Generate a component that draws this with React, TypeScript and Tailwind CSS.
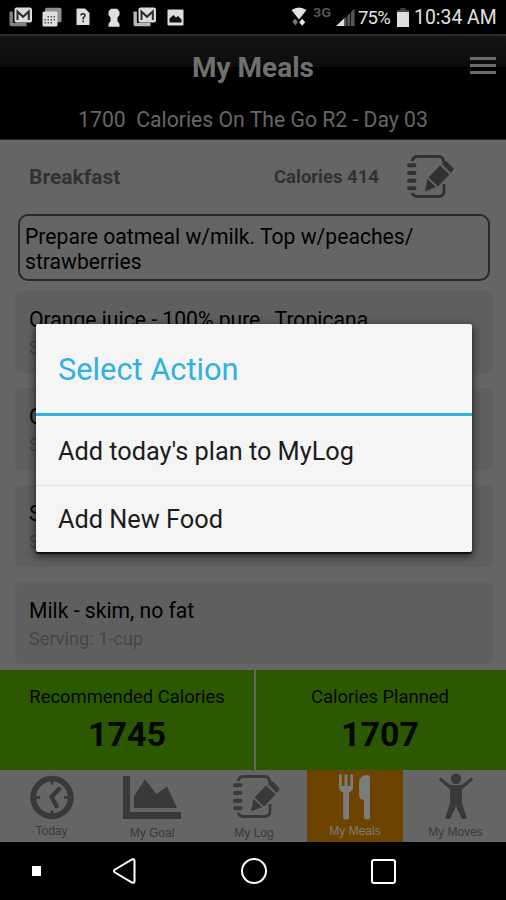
import React from 'react';

type IconProps = { className?: string };

/* Status bar icons */
function MailStack({ className, back }: IconProps & { back: string }) {
  return (
    <svg className={className} width="24" height="20" viewBox="0 0 24 20" fill="none">
      <path d="M2.2 4.5V17.5H17.5" stroke={back} strokeWidth="3.4" strokeLinejoin="round" />
      <rect x="5.5" y="0.5" width="17.5" height="15" rx="2" fill="#dcdcdc" />
      <path d="M8.5 13V4.5L14 9.8L19.8 4.5V13" stroke="#2a2a2a" strokeWidth="2" />
    </svg>
  );
}

function CalendarStack() {
  return (
    <svg width="20" height="20" viewBox="0 0 20 20">
      <rect x="3" y="0.8" width="16.5" height="14.5" rx="1.5" fill="#8f8f8f" />
      <rect x="0.5" y="4.5" width="15" height="15" rx="1.5" fill="#dedede" />
      <g fill="#555">
        <rect x="5.5" y="9" width="1.5" height="1.5" /><rect x="8.5" y="9" width="1.5" height="1.5" /><rect x="11.5" y="9" width="1.5" height="1.5" />
        <rect x="2.5" y="12" width="1.5" height="1.5" /><rect x="5.5" y="12" width="1.5" height="1.5" /><rect x="8.5" y="12" width="1.5" height="1.5" /><rect x="11.5" y="12" width="1.5" height="1.5" />
        <rect x="2.5" y="15" width="1.5" height="1.5" /><rect x="5.5" y="15" width="1.5" height="1.5" /><rect x="8.5" y="15" width="1.5" height="1.5" />
      </g>
    </svg>
  );
}

function HelpDoc() {
  return (
    <svg width="14" height="18" viewBox="0 0 14 18">
      <path d="M1 0.5H9L13.5 5V17H0.5V1Z" fill="#dedede" />
      <path d="M4.8 7.3Q5 5.7 7 5.7Q9 5.8 9 7.6Q9 8.8 7.2 9.8V11.5" fill="none" stroke="#222" strokeWidth="1.5" />
      <rect x="6.4" y="12.6" width="1.6" height="1.6" fill="#222" />
    </svg>
  );
}

function Pawn() {
  return (
    <svg width="12" height="19" viewBox="0 0 12 19" fill="#dedede">
      <path d="M3 0.8H9L11.5 3.5V7L9.5 9.5V13L11.5 16V18.7H0.5V16L2.5 13V9.5L0.5 7V3.5Z" />
    </svg>
  );
}

function Picture() {
  return (
    <svg width="17" height="17" viewBox="0 0 17 17">
      <rect x="0.5" y="0.5" width="16" height="16" rx="1" fill="#dedede" />
      <path d="M2.5 13.5V9.5L6.5 6L9 8.5L11 7L14.5 10.5V13.5Z" fill="#111" />
    </svg>
  );
}

function Wifi() {
  return (
    <svg width="16" height="20" viewBox="0 0 16 20">
      <path d="M0.5 3Q8 -2 15.5 3L8 12.5Z" fill="#e4e4e4" />
      <path d="M3.8 11.5L6.8 14.8L4.5 18.5L1.5 14.8Z" fill="#777" />
      <path d="M11.2 18.8L8.2 15.3L11.2 11.8L14.2 15.3Z" fill="#e4e4e4" />
    </svg>
  );
}

function Signal() {
  return (
    <svg width="19" height="19" viewBox="0 0 19 19">
      <path d="M0 18L8.5 10V18Z" fill="#dedede" />
      <path d="M8.5 10.3L10.5 8.5V18H8.5ZM11.3 7.7L14.2 5V18H11.3ZM15 4L18.5 0.5V18H15Z" fill="#555" />
    </svg>
  );
}

/* App icons */
function LogIcon({ className }: IconProps) {
  return (
    <svg className={className} width="47" height="44" viewBox="0 0 47 44" fill="none" stroke="currentColor">
      <path d="M5 6Q6.5 1.5 10.5 1.5H31.5Q36.5 1.5 36.5 7M37 29V36Q37 41.5 31.5 41.5H10.5Q6.5 41.5 5 38" strokeWidth="2.8" />
      <path d="M2 10.3H7.5M2 18H7.5M2 25.7H7.5M2 33.2H7.5" strokeWidth="4" strokeLinecap="round" />
      <path d="M33 10.5L42.5 19.5L31 31.5L21.5 22.5Z" fill="currentColor" stroke="none" />
      <path d="M20.5 24L29 32L18 36.5Z" fill="currentColor" stroke="none" />
      <path d="M34.8 9L37.2 6.5Q38.5 5.5 40 6.8L46 12.8Q47 14.3 46 15.5L43.8 18Z" fill="currentColor" stroke="none" />
    </svg>
  );
}

function ClockIcon() {
  return (
    <svg width="44" height="45" viewBox="0 0 44 45" fill="none" stroke="currentColor">
      <circle cx="22" cy="22.5" r="18.8" strokeWidth="5.8" />
      <path d="M22 6V9.5M22 35.5V39M6 22.5H10M34 22.5H38" strokeWidth="2.4" />
      <path d="M29 14L21.5 22L26.5 31" strokeWidth="4.4" strokeLinecap="round" strokeLinejoin="round" />
    </svg>
  );
}

function GoalIcon() {
  return (
    <svg width="58" height="44" viewBox="0 0 58 44" fill="currentColor">
      <path d="M0 0H7V36H58V43H0Z" />
      <path d="M11 32V20L22 3.5L33.5 18L44 10.5L54 32Z" />
    </svg>
  );
}

function MealsIcon() {
  return (
    <svg width="32" height="46" viewBox="0 0 32 46" fill="currentColor">
      <path d="M0 1.5Q0 0 1.3 0T2.8 1.5V12H5.5V1.5Q5.5 0 7 0T8.5 1.5V12H11.3V1.5Q11.3 0 12.7 0T14 1.5V13Q14 17 10 18.5V44Q10 45.5 7.2 45.5T4.2 44V18.5Q0 17 0 13Z" />
      <path d="M20 9Q20.5 1 28 1Q31 1 31 4V43.5Q31 45.5 28 45.5T25 43.5V26Q20 25.5 20 21Z" />
    </svg>
  );
}

function MovesIcon() {
  return (
    <svg width="36" height="47" viewBox="0 0 36 47" fill="currentColor">
      <circle cx="18" cy="5.8" r="5.2" />
      <path d="M2.5 4.5L12.5 12H23.5L33.5 4.5Q35.5 5.5 34.5 7.3L24 16.5V30L28.8 44.5Q26.5 47.5 23.5 45.5L18 33L12.5 45.5Q9.5 47.5 7.2 44.5L12 30V16.5L1.5 7.3Q0.5 5.5 2.5 4.5Z" />
    </svg>
  );
}

const foods = [
  { name: 'Orange juice - 100% pure,  Tropicana', serving: 'Serving: 1-cup' },
  { name: 'Oatmeal', serving: 'Serving: 1-cup' },
  { name: 'Strawberries', serving: 'Serving: 1-cup' },
  { name: 'Milk - skim, no fat', serving: 'Serving: 1-cup' },
];

export default function App() {
  return (
    <div className="relative w-[506px] h-[900px] overflow-hidden bg-[#656565] font-['Roboto',sans-serif] flex flex-col">
      {/* Status bar */}
      <div className="h-[34px] shrink-0 bg-black flex items-center pl-[9px] pr-[8px] text-[#e2e2e2]">
        <MailStack back="#808080" />
        <div className="ml-[9px]"><CalendarStack /></div>
        <div className="ml-[14px]"><HelpDoc /></div>
        <div className="ml-[18px]"><Pawn /></div>
        <MailStack className="ml-[13px]" back="#b8b8b8" />
        <div className="ml-[10px]"><Picture /></div>
        <div className="ml-auto"><Wifi /></div>
        <span className="ml-[6px] w-[20px] -mt-[9px] text-[12px] leading-none font-bold text-[#555] scale-x-120 origin-left">3G</span>
        <div className="ml-[3px]"><Signal /></div>
        <span className="ml-[3px] w-[34px] mt-[2px] text-[18.5px] leading-none tracking-[-0.8px]">75%</span>
        <svg className="ml-[5px]" width="12" height="19" viewBox="0 0 12 19">
          <path d="M3.5 0H8.5V2H12V5H0V2H3.5Z" fill="#444" />
          <rect y="4" width="12" height="15" fill="#dedede" />
        </svg>
        <span className="ml-[5px] w-[84px] mt-[2px] text-[19.4px] leading-none whitespace-nowrap">10:34 AM</span>
      </div>

      {/* Header */}
      <header className="h-[106px] shrink-0 bg-black border-t-2 border-b border-[#2b2b2b] relative">
        <div className="h-[31px] bg-linear-to-b from-[#151515] to-[#0c0c0c]" />
        <h1 className="-mt-[17px] h-[36px] text-center text-[28px] leading-[36px] font-bold text-[#707070]">My Meals</h1>
        <p className="mt-[20px] text-center text-[21.2px] leading-[28px] text-[#666] whitespace-pre">1700  Calories On The Go R2 - Day 03</p>
        <div className="absolute right-[10px] top-[21px] flex flex-col gap-1">
          <div className="w-[26px] h-[3px] bg-[#6b6b6b]" />
          <div className="w-[26px] h-[3px] bg-[#6b6b6b]" />
          <div className="w-[26px] h-[3px] bg-[#6b6b6b]" />
        </div>
      </header>

      {/* Meal plan */}
      <main className="h-[530px] shrink-0 overflow-hidden">
        <div className="h-[74px] flex items-center pl-[29px] text-[#303232] font-bold">
          <span className="w-[245px] mt-px text-[21px]">Breakfast</span>
          <span className="w-[133px] mt-px text-[18.5px]">Calories 414</span>
          <LogIcon className="-mt-px" />
        </div>
        <div className="ml-[18px] w-[472px] h-[67px] rounded-[10px] border-2 border-[#262a2a] pl-[5px] pt-[8px] text-[21.15px] leading-[25px] text-black">
          Prepare oatmeal w/milk. Top w/peaches/<br />strawberries
        </div>
        <div className="mt-[10px] flex flex-col gap-[15px]">
          {foods.map((food) => (
            <div key={food.name} className="ml-[15px] w-[478px] h-[82px] shrink-0 rounded-[6px] bg-[#5f5f5f] pl-[14px] pt-[15px]">
              <p className="text-[21.15px] leading-[28px] text-black whitespace-pre">{food.name}</p>
              <p className="text-[18.2px] leading-[28px] text-[#464646]">{food.serving}</p>
            </div>
          ))}
        </div>
      </main>

      {/* Calorie totals */}
      <div className="h-[100px] shrink-0 flex text-center text-[#040800]">
        <div className="w-[254px] bg-[#2c5800] pt-[14px]">
          <p className="text-[18.4px] leading-[26px]">Recommended Calories</p>
          <p className="text-[34px] leading-[48px] font-bold">1745</p>
        </div>
        <div className="w-[2px] bg-[#656565]" />
        <div className="flex-1 bg-[#2c5800] pt-[14px] pr-[2px]">
          <p className="text-[18.4px] leading-[26px]">Calories Planned</p>
          <p className="text-[34px] leading-[48px] font-bold">1707</p>
        </div>
      </div>

      {/* Tabs */}
      <nav className="h-[72px] shrink-0 flex text-[#393939] font-['Liberation_Sans',sans-serif] text-[12px] leading-[14px]">
        <div className="w-[103px] pt-[5px] flex flex-col items-center">
          <ClockIcon />
          <span className="mt-[4px]">Today</span>
        </div>
        <div className="w-[98px] pt-[6px] flex flex-col items-center">
          <GoalIcon />
          <span className="mt-[6px]">My Goal</span>
        </div>
        <div className="w-[106px] pt-[5px] flex flex-col items-center">
          <LogIcon className="ml-[4px]" />
          <span className="mt-[7px]">My Log</span>
        </div>
        <div className="w-[96px] pt-[4px] flex flex-col items-center bg-[#6c4400] text-[#7c7c7c]">
          <MealsIcon />
          <span className="mt-[4px]">My Meals</span>
        </div>
        <div className="flex-1 pt-[3px] pl-[2px] flex flex-col items-center">
          <MovesIcon />
          <span className="mt-[5px]">My Moves</span>
        </div>
      </nav>

      {/* Android navigation */}
      <div className="flex-1 bg-black flex items-center pl-[32px]">
        <div className="w-[9px] h-[10px] bg-white" />
        <svg className="ml-[71px]" width="25" height="28" viewBox="0 0 25 28" fill="none" stroke="#fff" strokeWidth="2">
          <path d="M3 12.5L20 2.5Q22.5 1.5 22.5 4V24Q22.5 26.5 20 25.5L3 15.5Q1 14 3 12.5Z" />
        </svg>
        <div className="ml-[104px] w-[26px] h-[26px] rounded-full border-[2.5px] border-white" />
        <div className="ml-[104px] w-[25px] h-[25px] rounded-[3px] border-2 border-white" />
      </div>

      {/* Action dialog */}
      <div className="absolute left-[36px] top-[324px] w-[436px] h-[228px] rounded-[2px] bg-[#f5f5f5] shadow-[0_3px_8px_1px_rgba(0,0,0,0.6),0_2px_1px_rgba(0,0,0,0.7)]">
        <h2 className="h-[92px] border-b-3 border-[#33b1dd] pl-[22px] text-[30.8px] leading-[92px] text-[#2fb2e2]">Select Action</h2>
        <button className="block w-full h-[70px] border-b border-[#e3e3e3] pl-[22px] pt-[2px] text-left text-[25.3px] text-[#1c1c1c]">Add today's plan to MyLog</button>
        <button className="block w-full h-[66px] pl-[22px] pt-[2px] text-left text-[25.3px] text-[#1c1c1c]">Add New Food</button>
      </div>
    </div>
  );
}
